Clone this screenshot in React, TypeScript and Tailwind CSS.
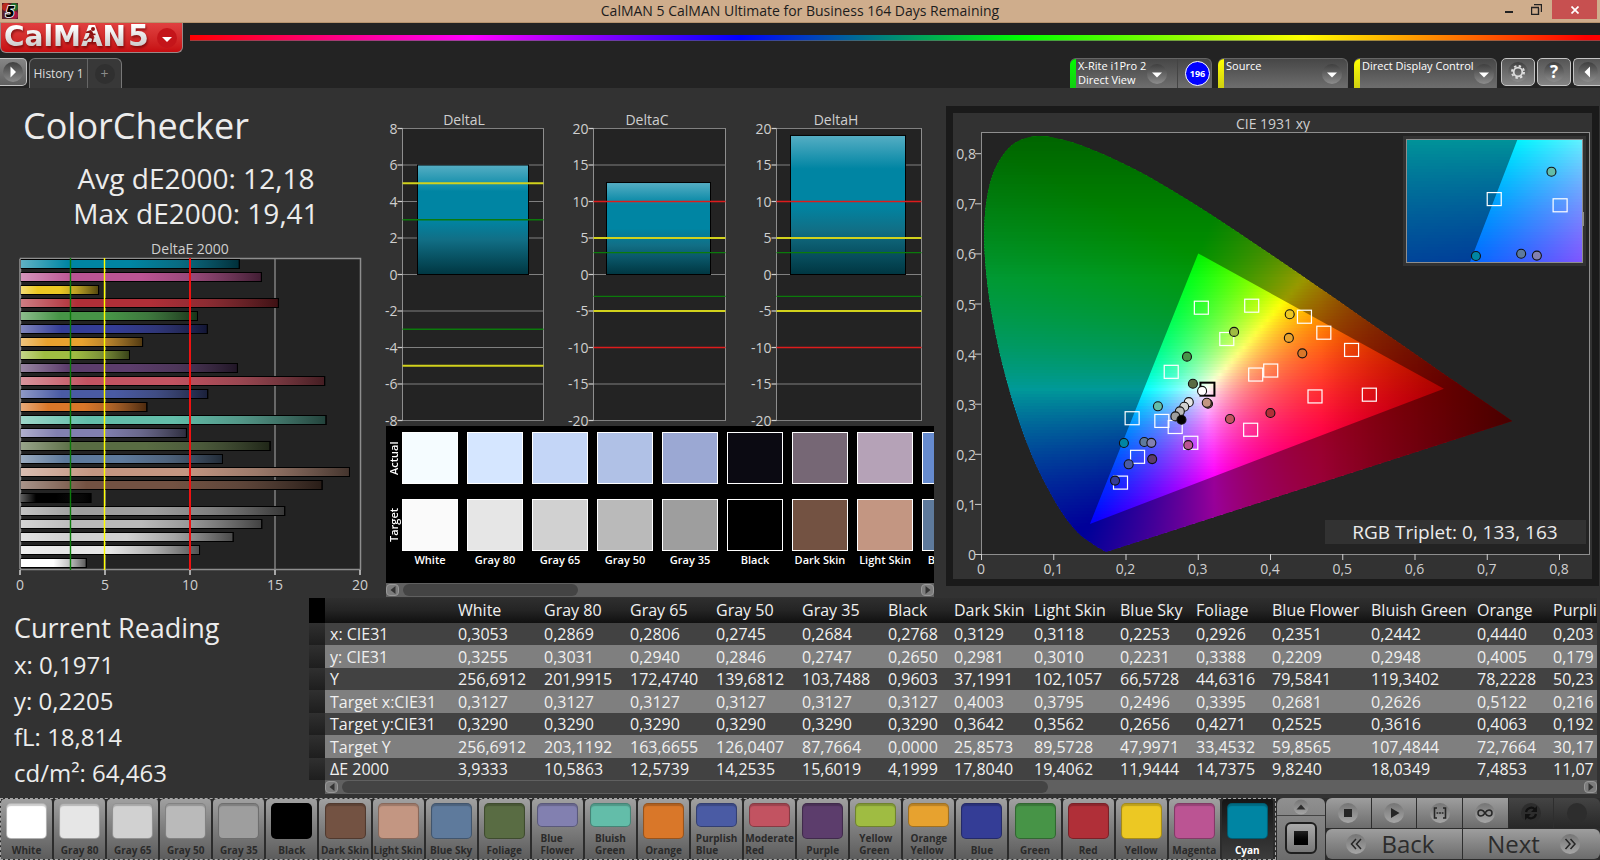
import { useId } from 'react';
import type { ReactNode } from 'react';
import clsx from 'clsx';

type XY = [number, number];

type Patch = {
  name: string;
  lines?: string[];
  color: string;
  de: number;
  measured: XY;
  target: XY;
};

const PATCHES: Patch[] = [
  { name: 'White', color: '#ffffff', de: 3.93, measured: [0.3053, 0.3255], target: [0.3127, 0.329] },
  { name: 'Gray 80', color: '#e6e6e6', de: 10.59, measured: [0.2869, 0.3031], target: [0.3127, 0.329] },
  { name: 'Gray 65', color: '#d1d1d1', de: 12.57, measured: [0.2806, 0.294], target: [0.3127, 0.329] },
  { name: 'Gray 50', color: '#bababa', de: 14.25, measured: [0.2745, 0.2846], target: [0.3127, 0.329] },
  { name: 'Gray 35', color: '#9e9e9e', de: 15.6, measured: [0.2684, 0.2747], target: [0.3127, 0.329] },
  { name: 'Black', color: '#000000', de: 4.2, measured: [0.2768, 0.268], target: [0.3127, 0.329] },
  { name: 'Dark Skin', color: '#735242', de: 17.8, measured: [0.3135, 0.3], target: [0.4003, 0.3662] },
  { name: 'Light Skin', color: '#c39682', de: 19.41, measured: [0.3118, 0.302], target: [0.3795, 0.3582] },
  { name: 'Blue Sky', color: '#5e7a9c', de: 11.94, measured: [0.2253, 0.2235], target: [0.2496, 0.2656] },
  { name: 'Foliage', color: '#596c43', de: 14.74, measured: [0.2926, 0.3398], target: [0.3395, 0.4291] },
  { name: 'Blue Flower', lines: ['Blue', 'Flower'], color: '#8280b0', de: 9.82, measured: [0.2351, 0.2219], target: [0.2681, 0.2535] },
  { name: 'Bluish Green', lines: ['Bluish', 'Green'], color: '#63bda9', de: 18.03, measured: [0.2442, 0.2948], target: [0.2626, 0.3636] },
  { name: 'Orange', color: '#d97729', de: 7.49, measured: [0.444, 0.4005], target: [0.5122, 0.4073] },
  { name: 'Purplish Blue', lines: ['Purplish', 'Blue'], color: '#4a5ba4', de: 11.07, measured: [0.2037, 0.179], target: [0.216, 0.194] },
  { name: 'Moderate Red', lines: ['Moderate', 'Red'], color: '#c25361', de: 17.95, measured: [0.3439, 0.2694], target: [0.4616, 0.3145] },
  { name: 'Purple', color: '#5c3d6c', de: 12.82, measured: [0.2362, 0.1894], target: [0.2897, 0.222] },
  { name: 'Yellow Green', lines: ['Yellow', 'Green'], color: '#9fbc42', de: 6.47, measured: [0.3496, 0.4433], target: [0.374, 0.4956] },
  { name: 'Orange Yellow', lines: ['Orange', 'Yellow'], color: '#e7a22f', de: 7.24, measured: [0.4254, 0.4313], target: [0.4738, 0.4417] },
  { name: 'Blue', color: '#343d96', de: 11.05, measured: [0.1848, 0.1465], target: [0.1924, 0.1425] },
  { name: 'Green', color: '#479447', de: 10.47, measured: [0.2844, 0.3939], target: [0.3043, 0.4916] },
  { name: 'Red', color: '#b02f38', de: 15.23, measured: [0.3999, 0.2814], target: [0.5368, 0.318] },
  { name: 'Yellow', color: '#ecc823', de: 4.65, measured: [0.4266, 0.4785], target: [0.447, 0.4736] },
  { name: 'Magenta', color: '#bb5493', de: 14.23, measured: [0.2862, 0.2174], target: [0.3725, 0.248] },
  { name: 'Cyan', color: '#0085a3', de: 12.93, measured: [0.1971, 0.2215], target: [0.2085, 0.271] },
];

const ACTUAL = ['#f5fcff', '#d5e6ff', '#c4d6f7', '#b0c1e6', '#9ba8d3', '#0b0a12', '#766775', '#b5a2b7', '#668bcf'];

const COLUMNS = [
  { label: 'White', width: 'w-[86px]' },
  { label: 'Gray 80', width: 'w-[86px]' },
  { label: 'Gray 65', width: 'w-[86px]' },
  { label: 'Gray 50', width: 'w-[86px]' },
  { label: 'Gray 35', width: 'w-[86px]' },
  { label: 'Black', width: 'w-[66px]' },
  { label: 'Dark Skin', width: 'w-[80px]' },
  { label: 'Light Skin', width: 'w-[86px]' },
  { label: 'Blue Sky', width: 'w-[76px]' },
  { label: 'Foliage', width: 'w-[76px]' },
  { label: 'Blue Flower', width: 'w-[99px]' },
  { label: 'Bluish Green', width: 'w-[106px]' },
  { label: 'Orange', width: 'w-[76px]' },
  { label: 'Purpli', width: '' },
];

const ROWS: [string, string[]][] = [
  ['x: CIE31', ['0,3053', '0,2869', '0,2806', '0,2745', '0,2684', '0,2768', '0,3129', '0,3118', '0,2253', '0,2926', '0,2351', '0,2442', '0,4440', '0,203']],
  ['y: CIE31', ['0,3255', '0,3031', '0,2940', '0,2846', '0,2747', '0,2650', '0,2981', '0,3010', '0,2231', '0,3388', '0,2209', '0,2948', '0,4005', '0,179']],
  ['Y', ['256,6912', '201,9915', '172,4740', '139,6812', '103,7488', '0,9603', '37,1991', '102,1057', '66,5728', '44,6316', '79,5841', '119,3402', '78,2228', '50,23']],
  ['Target x:CIE31', ['0,3127', '0,3127', '0,3127', '0,3127', '0,3127', '0,3127', '0,4003', '0,3795', '0,2496', '0,3395', '0,2681', '0,2626', '0,5122', '0,216']],
  ['Target y:CIE31', ['0,3290', '0,3290', '0,3290', '0,3290', '0,3290', '0,3290', '0,3642', '0,3562', '0,2656', '0,4271', '0,2525', '0,3616', '0,4063', '0,192']],
  ['Target Y', ['256,6912', '203,1192', '163,6655', '126,0407', '87,7664', '0,0000', '25,8573', '89,5728', '47,9971', '33,4532', '59,8565', '107,4844', '72,7664', '30,17']],
  ['ΔE 2000', ['3,9333', '10,5863', '12,5739', '14,2535', '15,6019', '4,1999', '17,8040', '19,4062', '11,9444', '14,7375', '9,8240', '18,0349', '7,4853', '11,07']],
];

const LOCUS: XY[] = [
  [0.1741, 0.005], [0.1714, 0.0051], [0.1644, 0.0109], [0.1566, 0.0177], [0.144, 0.0297], [0.1355, 0.0399],
  [0.1241, 0.0578], [0.1096, 0.0868], [0.0913, 0.1327], [0.0687, 0.2007], [0.0454, 0.295], [0.0235, 0.4127],
  [0.0082, 0.5384], [0.0039, 0.6548], [0.0139, 0.7502], [0.0389, 0.812], [0.0743, 0.8338], [0.1142, 0.8262],
  [0.1547, 0.8059], [0.1929, 0.7816], [0.2296, 0.7543], [0.3016, 0.6923], [0.3731, 0.6245], [0.4441, 0.5547],
  [0.5125, 0.4866], [0.5752, 0.4242], [0.627, 0.3725], [0.6658, 0.334], [0.6915, 0.3083], [0.719, 0.2809],
  [0.7347, 0.2653],
];

const GAMUT: XY[] = [[0.64, 0.33], [0.3, 0.6], [0.15, 0.06]];

const comma = (n: number) => String(n).replace('.', ',');

// brightest sRGB primaries mix for a chromaticity, out-of-gamut channels clipped
function chromaColor(x: number, y: number) {
  const yy = Math.max(y, 0.002);
  const X = x / yy;
  const Z = (1 - x - yy) / yy;
  const rgb = [
    3.2406 * X - 1.5372 - 0.4986 * Z,
    -0.9689 * X + 1.8758 + 0.0415 * Z,
    0.0557 * X - 0.204 + 1.057 * Z,
  ].map((v) => Math.max(v, 0));
  const max = Math.max(...rgb, 0.0001);
  const fade = Math.min(1 - 2 * Math.max(0, x - 0.47), 1 - 1.2 * Math.max(0, y - 0.55));
  return `rgb(${rgb.map((v) => Math.round((255 * fade * v) / max)).join(',')})`;
}

function smoothPath(pts: XY[]) {
  let d = `M${pts[0][0]},${pts[0][1]}`;
  for (let i = 0; i < pts.length - 1; i++) {
    const p0 = pts[Math.max(i - 1, 0)];
    const p1 = pts[i];
    const p2 = pts[i + 1];
    const p3 = pts[Math.min(i + 2, pts.length - 1)];
    d += `C${p1[0] + (p2[0] - p0[0]) / 6},${p1[1] + (p2[1] - p0[1]) / 6} ${p2[0] - (p3[0] - p1[0]) / 6},${p2[1] - (p3[1] - p1[1]) / 6} ${p2[0]},${p2[1]}`;
  }
  return d + 'Z';
}

type View = { left: number; top: number; width: number; height: number; ox: number; oy: number; sx: number; sy: number };

function ChromaField({ view }: { view: View }) {
  const id = useId();
  const { left, top, width, height, ox, oy, sx, sy } = view;
  const step = 3;
  const stops = Math.ceil(width / 6);
  const toPx = ([x, y]: XY): XY => [ox + x * sx, oy - y * sy];
  const locus = smoothPath(LOCUS.map(toPx));
  const gamut = 'M' + GAMUT.map((p) => toPx(p).join(',')).join('L') + 'Z';
  const rows = Array.from({ length: Math.ceil(height / step) }, (_, i) => top + i * step);

  return (
    <g>
      <defs>
        <clipPath id={`${id}-locus`}>
          <path d={locus} />
        </clipPath>
        <clipPath id={`${id}-box`}>
          <rect x={left} y={top} width={width} height={height} />
        </clipPath>
        {rows.map((y, i) => (
          <linearGradient key={i} id={`${id}-${i}`} gradientUnits="userSpaceOnUse" x1={left} x2={left + width} y1="0" y2="0">
            {Array.from({ length: stops + 1 }, (_, s) => {
              const px = left + (width * s) / stops;
              return <stop key={s} offset={s / stops} stopColor={chromaColor((px - ox) / sx, (oy - y - step / 2) / sy)} />;
            })}
          </linearGradient>
        ))}
      </defs>
      <g clipPath={`url(#${id}-box)`}>
        <g clipPath={`url(#${id}-locus)`}>
          {rows.map((y, i) => (
            <rect key={i} x={left} y={y} width={width} height={step + 1} fill={`url(#${id}-${i})`} />
          ))}
          <path d={`M${left - 2000},${top - 2000}h6000v6000h-6000Z${gamut}`} fillRule="evenodd" fill="#000" fillOpacity="0.4" />
        </g>
      </g>
    </g>
  );
}

function Markers({ view, names }: { view: View; names?: { targets: string[]; dots: string[] } }) {
  const { ox, oy, sx, sy } = view;
  const targets = PATCHES.slice(6).filter((p) => !names || names.targets.includes(p.name));
  const dots = PATCHES.filter((p) => !names || names.dots.includes(p.name));
  return (
    <g>
      {targets.map((p) => (
        <rect key={p.name} x={ox + p.target[0] * sx - 7} y={oy - p.target[1] * sy - 6.5} width="14" height="13" fill="none" stroke="#fff" strokeWidth="1.2" />
      ))}
      {!names && <rect x={ox + 0.3127 * sx - 7} y={oy - 0.329 * sy - 6.5} width="14" height="13" fill="none" stroke="#000" strokeWidth="2" />}
      {dots.map((p) => (
        <circle key={p.name} cx={ox + p.measured[0] * sx} cy={oy - p.measured[1] * sy} r="4.5" fill={p.color} stroke="#111" strokeWidth="1.1" />
      ))}
    </g>
  );
}

function CieChart() {
  const main: View = { left: 29, top: 20, width: 607, height: 421, ox: 28.5, oy: 441, sx: 722.5, sy: 501 };
  // inset is a magnified window round the selected patch
  const inset: View = { left: 453, top: 26, width: 177, height: 124, ox: 207, oy: 398, sx: 1603, sy: 1151 };
  return (
    <svg viewBox="0 0 639 466" className="block w-full" role="img" aria-label="CIE 1931 xy">
      <rect width="639" height="466" fill="#323232" />
      <text x="320" y="16" textAnchor="middle" fontSize="14" fill="#cfcfcf">CIE 1931 xy</text>
      <rect x="28.5" y="19.5" width="608" height="422" fill="#232323" />
      <ChromaField view={main} />
      <rect x="28.5" y="19.5" width="608" height="422" fill="none" stroke="#8e8e8e" />
      {[0, 0.1, 0.2, 0.3, 0.4, 0.5, 0.6, 0.7, 0.8].map((v) => (
        <g key={v} fontSize="14" fill="#cfcfcf">
          <path d={`M${28.5 + v * 722.5},441v6M22,${441.5 - v * 501}h6`} stroke="#cfcfcf" fill="none" />
          <text x={28 + v * 722.5} y="461" textAnchor="middle">{comma(v)}</text>
          <text x="23" y={447 - v * 501} textAnchor="end">{comma(v)}</text>
        </g>
      ))}
      <Markers view={main} />
      <rect x="450" y="23" width="183" height="130" fill="#323232" />
      <ChromaField view={inset} />
      <rect x="453.5" y="26.5" width="176" height="123" fill="none" stroke="#8e8e8e" />
      <path d="M630.5,99v14" stroke="#8e8e8e" />
      <Markers view={inset} names={{ targets: ['Cyan', 'Blue Sky'], dots: ['Bluish Green', 'Cyan', 'Blue Sky', 'Blue Flower'] }} />
      <rect x="372" y="407" width="261" height="24" fill="#323232" />
      <text x="502" y="426" textAnchor="middle" fontSize="19" fill="#ececec">RGB Triplet: 0, 133, 163</text>
    </svg>
  );
}

function DeltaEChart() {
  const bars = [...PATCHES].reverse();
  return (
    <svg viewBox="0 0 380 356" className="block w-full overflow-visible" role="img" aria-label="DeltaE 2000">
      <defs>
        <linearGradient id="shadeX">
          <stop offset="0" stopColor="#fff" stopOpacity="0.38" />
          <stop offset="0.22" stopColor="#fff" stopOpacity="0" />
          <stop offset="0.5" stopColor="#222" stopOpacity="0" />
          <stop offset="0.72" stopColor="#222" stopOpacity="0.25" />
          <stop offset="1" stopColor="#000" stopOpacity="0.65" />
        </linearGradient>
      </defs>
      <text x="190" y="12" textAnchor="middle" fontSize="14" fill="#cfcfcf">DeltaE 2000</text>
      <rect x="20.5" y="16.5" width="340" height="311" fill="#232323" stroke="#8e8e8e" strokeWidth="1.5" />
      {[5, 10, 15].map((v) => (
        <path key={v} d={`M${20 + v * 17},17v310`} stroke="#808080" strokeWidth="1.5" />
      ))}
      {bars.map((p, i) => (
        <g key={p.name} stroke="#000">
          <rect x="20.5" y={17.5 + i * 13} width={p.de * 17 - 1} height="9" fill={p.color} />
          <rect x="20.5" y={17.5 + i * 13} width={p.de * 17 - 1} height="9" fill="url(#shadeX)" />
        </g>
      ))}
      <path d="M20,17v310" stroke="#8e8e8e" strokeWidth="1.5" />
      <path d="M70.5,16v312" stroke="#0b7a0b" strokeWidth="1.4" />
      <path d="M104.5,16v312" stroke="#ffff00" strokeWidth="1.4" />
      <path d="M190,16v312" stroke="#ee1111" strokeWidth="2" />
      {[0, 5, 10, 15, 20].map((v) => (
        <g key={v}>
          <path d={`M${20 + v * 17},328v5`} stroke="#cfcfcf" strokeWidth="1.5" />
          <text x={20 + v * 17} y="348" textAnchor="middle" fontSize="14" fill="#cfcfcf">{v}</text>
        </g>
      ))}
    </svg>
  );
}

type DeltaProps = { title: string; width: number; titleX: number; plotX: number; plotW: number; barX: number; barW: number; max: number; step: number; value: number };

function DeltaChart({ title, width, titleX, plotX, plotW, barX, barW, max, step, value }: DeltaProps) {
  const k = 146 / max;
  const zero = 186.5;
  const ticks = Array.from({ length: 9 }, (_, i) => max - i * step);
  const limits: [number, string, number][] = [
    [3, '#0b7a0b', 1.3],
    [5, '#d2d21c', 1.8],
    [10, '#dd1c1c', 1.4],
  ];
  return (
    <svg viewBox={`0 0 ${width} 338`} className="block min-w-0 overflow-visible" style={{ flex: `${width} 1 0%` }} role="img" aria-label={title}>
      <defs>
        <linearGradient id={`bar${title}`} x1="0" x2="0" y1="0" y2="1">
          <stop offset="0" stopColor="#56aec4" />
          <stop offset="0.24" stopColor="#0085a3" />
          <stop offset="0.5" stopColor="#0085a3" />
          <stop offset="0.68" stopColor="#116f86" />
          <stop offset="1" stopColor="#003641" />
        </linearGradient>
      </defs>
      <text x={titleX} y="37" textAnchor="middle" fontSize="14" fill="#cfcfcf">{title}</text>
      <rect x={plotX} y="40.5" width={plotW} height="292" fill="#232323" stroke="#8e8e8e" />
      {ticks.map((t) => (
        <g key={t}>
          <path d={`M${plotX},${zero - t * k}h${plotW}`} stroke="#808080" />
          <path d={`M${plotX - 5},${zero - t * k}h5`} stroke="#cfcfcf" strokeWidth="1.2" />
          <text x={plotX - 5} y={zero - t * k + 5} textAnchor="end" fontSize="14" fill="#cfcfcf">{t}</text>
        </g>
      ))}
      <rect x={barX} y={zero - value * k} width={barW} height={value * k} fill={`url(#bar${title})`} stroke="#000" />
      {limits.filter(([v]) => v < max).map(([v, c, w]) => (
        <path key={v} d={`M${plotX},${zero - v * k}h${plotW}M${plotX},${zero + v * k}h${plotW}`} stroke={c} strokeWidth={w} />
      ))}
    </svg>
  );
}

function ScrollBar({ label, thumb }: { label: string; thumb: string }) {
  const arrow = 'flex h-3 w-[13px] shrink-0 items-center justify-center rounded-sm border border-[#989898] bg-[#7c7c7c]';
  return (
    <div className="flex h-[14px] items-center justify-between bg-[#606060]" aria-label={label}>
      <button className={arrow} aria-label={`${label} left`}>
        <svg viewBox="0 0 6 8" className="h-2 w-[6px]"><path d="M5.5 0v8L0.5 4z" fill="#333" /></svg>
      </button>
      <div className="mx-1 flex-1">
        <div className={clsx('h-3 rounded-full bg-[#444]', thumb)} />
      </div>
      <button className={arrow} aria-label={`${label} right`}>
        <svg viewBox="0 0 6 8" className="h-2 w-[6px]"><path d="M0.5 0v8L5.5 4z" fill="#333" /></svg>
      </button>
    </div>
  );
}

function SwatchPanel() {
  const rows: [string, string[]][] = [
    ['Actual', ACTUAL],
    ['Target', ['#fafafa', ...PATCHES.slice(1, 9).map((p) => p.color)]],
  ];
  return (
    <section className="mr-3 ml-[6px] bg-black">
      <div className="flex h-[157px] overflow-hidden pt-[6px]">
        <div className="flex w-4 shrink-0 flex-col gap-[15px]">
          {rows.map(([label]) => (
            <span key={label} className="flex h-[52px] rotate-180 items-center justify-center text-[11px] leading-4 font-semibold text-white [writing-mode:vertical-rl]">
              {label}
            </span>
          ))}
        </div>
        <div className="flex gap-[9px] overflow-hidden">
          {ACTUAL.map((_, i) => (
            <div key={i} className="flex w-14 shrink-0 flex-col items-center">
              <div className="h-[52px] w-14 border border-white" style={{ background: rows[0][1][i] }} />
              <div className="mt-[15px] h-[52px] w-14 border border-white" style={{ background: rows[1][1][i] }} />
              <span className="mt-px text-[11px] leading-4 font-semibold whitespace-nowrap text-white">{PATCHES[i].name}</span>
            </div>
          ))}
        </div>
      </div>
      <ScrollBar label="Swatches" thumb="w-[34%]" />
    </section>
  );
}

function ReadingTable() {
  return (
    <section className="min-w-0 flex-1 pr-[3px]">
      <table className="w-full table-fixed border-collapse text-left text-base text-[#f0f0f0]">
        <thead>
          <tr className="h-[25px] bg-linear-to-b from-[#2f2f2f] via-[#242424] to-[#101010]">
            <td className="w-4 bg-black p-0" />
            <td className="w-32 p-0" />
            {COLUMNS.map((c) => (
              <th key={c.label} scope="col" className={clsx('overflow-hidden p-0 pb-px pl-[5px] leading-5 font-normal whitespace-nowrap', c.width)}>
                {c.label}
              </th>
            ))}
          </tr>
        </thead>
        <tbody>
          {ROWS.map(([label, values]) => (
            <tr key={label} className="h-[22px] bg-[#424242] even:h-[23px] even:bg-[#7f7f7f]">
              <td className="bg-linear-to-b from-[#303030] to-[#1e1e1e] p-0" />
              <th scope="row" className="overflow-hidden p-0 pl-[5px] leading-5 font-normal whitespace-nowrap">{label}</th>
              {values.map((v, i) => (
                <td key={i} className="overflow-hidden p-0 pl-[5px] leading-5 whitespace-nowrap">{v}</td>
              ))}
            </tr>
          ))}
        </tbody>
      </table>
      <div className="ml-4">
        <ScrollBar label="Readings" thumb="w-[57%]" />
      </div>
    </section>
  );
}

function DownArrow() {
  return (
    <svg viewBox="0 0 20 20" className="h-5 w-5 shrink-0" aria-hidden="true">
      <circle cx="10" cy="10" r="10" fill="url(#roundShade)" />
      <path d="M5 8.5h10L10 13.5z" fill="#fff" />
    </svg>
  );
}

function Meter({ bar, className, children, name }: { bar: string; className: string; children: ReactNode; name: string }) {
  return (
    <button aria-label={name} className={clsx('flex h-[30px] items-start rounded-t-md border-t border-r border-[#666] bg-linear-to-b from-[#474747] to-[#6e6e6e] text-left text-[11px] leading-[14px] text-white', className)}>
      <span className={clsx('mr-[2px] h-full w-[6px] shrink-0 rounded-tl-md', bar)} />
      {children}
    </button>
  );
}

function SquareButton({ name, children }: { name: string; children: ReactNode }) {
  return (
    <button aria-label={name} className="flex h-7 w-[34px] shrink-0 items-center justify-center rounded-[5px] border border-[#c4c4c4] bg-linear-to-b from-[#555] via-[#6c6c6c] to-[#858585]">
      <svg viewBox="0 0 22 22" className="h-[22px] w-[22px]" aria-hidden="true">
        <circle cx="11" cy="11" r="10" fill="url(#roundShade)" />
        {children}
      </svg>
    </button>
  );
}

function Header() {
  return (
    <header className="bg-[#232323]">
      <div className="flex h-[23px] items-center border-b border-[#b7946f] bg-[#cfad8c] pl-[2px] text-[#1c1c1c]">
        <svg viewBox="0 0 16 16" className="h-4 w-4 overflow-visible" aria-hidden="true">
          <rect width="16" height="16" fill="#56202a" />
          <circle cx="4" cy="4" r="4" fill="#b72a1d" />
          <circle cx="12" cy="4" r="4" fill="#1f6b2c" />
          <circle cx="12" cy="12" r="4" fill="#a31843" />
          <text x="8" y="13.5" textAnchor="middle" fontSize="15" fontWeight="800" fontStyle="italic" fill="#000" stroke="#fff" strokeWidth="1.6" paintOrder="stroke">5</text>
        </svg>
        <h1 className="flex-1 pl-[86px] text-center text-sm leading-5">CalMAN 5 CalMAN Ultimate for Business 164 Days Remaining</h1>
        <div className="flex h-full items-start pr-[3px]">
          <button aria-label="Minimize" className="flex h-[19px] w-[25px] items-end justify-center pb-[6px]"><span className="h-[2px] w-2 bg-[#222]" /></button>
          <button aria-label="Restore" className="flex h-[19px] w-[31px] items-center justify-center">
            <svg viewBox="0 0 11 11" className="h-[11px] w-[11px]"><path d="M3 0.5h7.5V8M0 3.5h8M0.5 3v7.5h7V4" fill="none" stroke="#222" strokeWidth="1.4" /></svg>
          </button>
          <button aria-label="Close" className="flex h-[19px] w-[45px] items-center justify-center bg-[#c75050]">
            <svg viewBox="0 0 8 8" className="h-2 w-2"><path d="M0.5 0.5l7 7M7.5 0.5l-7 7" stroke="#fff" strokeWidth="1.7" /></svg>
          </button>
        </div>
      </div>

      <div className="flex h-[35px] items-start">
        <button aria-label="CalMAN 5 menu" className="flex h-[30px] w-[183px] items-center rounded-b-md border border-t-0 border-[#9a8888] bg-linear-to-b from-[#e04040] to-[#c60b10] pl-1">
          <svg viewBox="0 0 148 28" className="h-7 w-[148px] overflow-visible drop-shadow-[1px_2px_1px_rgba(90,0,0,0.6)]" aria-hidden="true">
            <defs>
              <linearGradient id="silver" x1="0" x2="0" y1="0" y2="1">
                <stop offset="0.2" stopColor="#fff" />
                <stop offset="0.9" stopColor="#c4c4c4" />
              </linearGradient>
            </defs>
            <g fontFamily="'DejaVu Sans'" fontWeight="700" fill="url(#silver)">
              <text x="-1" y="22" fontSize="28">CalMAN</text>
              <text x="123" y="22" fontSize="30">5</text>
            </g>
            <circle cx="88" cy="5" r="2" fill="#8c1010" />
            <path d="M81 8.5l4.500-1.500 2 3 3 0.500M86 7l-1.500 5.500 3.500 2-1 4M84.500 12.500l-3 3.500-3 0" fill="none" stroke="#8c1010" strokeWidth="1.500" />
          </svg>
          <svg viewBox="0 0 20 20" className="ml-1 h-5 w-5" aria-hidden="true">
            <circle cx="10" cy="10" r="10" fill="#c4151a" />
            <path d="M5 9h10l-5 5z" fill="#fff" />
          </svg>
        </button>
        <div className="mt-3 ml-[7px] h-[6px] flex-1 border-b border-[#666]/60 bg-[linear-gradient(90deg,#ff0000,#ff00ff_20%,#0000ff_39%,#00ff00_59%,#ffff00_79%,#ff0000_99%)]" />
      </div>

      <div className="flex h-[30px] items-start">
        <button aria-label="Show workflow" className="flex h-7 w-[27px] items-center rounded-r-[5px] border border-l-0 border-[#c4c4c4] bg-linear-to-b from-[#868686] to-[#606060] pl-[2px]">
          <svg viewBox="0 0 22 22" className="h-[22px] w-[22px]" aria-hidden="true">
            <circle cx="11" cy="11" r="10" fill="url(#roundShade)" />
            <path d="M8.500 5.500v11l5.500-5.500z" fill="#fff" />
          </svg>
        </button>
        <div className="ml-[2px] flex h-[30px] rounded-t-md border border-b-0 border-[#777] bg-[#383838]">
          <button className="w-[58px] border-r border-[#666] text-center text-xs text-[#ddd]">History 1</button>
          <button aria-label="Add history" className="flex w-[33px] items-center justify-center">
            <span className="flex h-5 w-5 items-center justify-center rounded-full bg-[#303030] text-sm leading-5 text-[#8a8a8a]">+</span>
          </button>
        </div>
        <div className="ml-auto flex">
          <Meter name="Meter" bar="bg-linear-to-b from-[#00ff00] to-[#11cc11]" className="mr-[6px] w-[142px]">
            <span className="w-[69px] shrink-0 whitespace-nowrap">X-Rite i1Pro 2<br />Direct View</span>
            <span className="flex h-full flex-1 items-center"><DownArrow /></span>
            <span className="flex h-full items-center border-l border-[#444] pr-px pl-[7px]">
              <span className="flex h-[25px] w-[25px] items-center justify-center rounded-full border border-white bg-[#0000ff] text-[9px] font-bold">196</span>
            </span>
          </Meter>
          <Meter name="Source" bar="bg-linear-to-b from-[#ffff00] to-[#d0d010]" className="mr-[6px] w-[130px]">
            <span className="flex-1">Source</span>
            <span className="flex h-full items-center pr-[5px]"><DownArrow /></span>
          </Meter>
          <Meter name="Display control" bar="bg-linear-to-b from-[#ffff00] to-[#d0d010]" className="mr-1 w-[143px]">
            <span className="flex-1 whitespace-nowrap">Direct Display Control</span>
            <span className="flex h-full items-center pr-[2px]"><DownArrow /></span>
          </Meter>
          <div className="flex gap-[2px]">
            <SquareButton name="Settings">
              <circle cx="11" cy="11" r="4.3" fill="none" stroke="#ddd" strokeWidth="1.8" />
              <circle cx="11" cy="11" r="6" fill="none" stroke="#ddd" strokeWidth="2" strokeDasharray="2.4 2.31" />
            </SquareButton>
            <SquareButton name="Help">
              <text x="11" y="17" textAnchor="middle" fontSize="17" fontWeight="700" fill="#fff">?</text>
            </SquareButton>
            <button aria-label="Show panel" className="flex h-7 w-[27px] items-center rounded-l-[5px] border border-r-0 border-[#c4c4c4] bg-linear-to-b from-[#555] to-[#858585] pl-[3px]">
              <svg viewBox="0 0 22 22" className="h-[22px] w-[22px]" aria-hidden="true">
                <circle cx="11" cy="11" r="10" fill="url(#roundShade)" />
                <path d="M13 5.500v11L7.500 11z" fill="#fff" />
              </svg>
            </button>
          </div>
        </div>
      </div>
    </header>
  );
}

function PatchButton({ patch }: { patch: Patch }) {
  const selected = patch.name === 'Cyan';
  return (
    <button
      className={clsx(
        'flex min-w-0 flex-1 flex-col items-center justify-between overflow-hidden rounded-t-sm border-r-2 border-[#2c2c2c] pt-1 text-[10px] leading-3 font-bold whitespace-nowrap',
        selected ? 'bg-linear-to-b from-[#161616] to-[#3c3c3c] text-white' : 'bg-linear-to-b from-[#a0a0a0] via-[#7d7d7d] to-[#5c5c5c] text-[#2a2a2a]',
      )}
    >
      <span
        className={clsx('w-[41px] shrink-0 rounded-[5px] border border-black/30 shadow-[inset_0_2px_1px_rgba(0,0,0,0.2)]', patch.lines ? 'h-6' : 'h-9')}
        style={{ background: patch.color }}
      />
      <span className="pb-[3px] text-left">
        {(patch.lines ?? [patch.name]).map((line) => (
          <span key={line} className="block">{line}</span>
        ))}
      </span>
    </button>
  );
}

function RoundIcon({ children, dark }: { children?: ReactNode; dark?: boolean }) {
  return (
    <svg viewBox="0 0 20 20" className="h-5 w-5" aria-hidden="true">
      <circle cx="10" cy="10" r="10" fill={dark ? '#2d2d2d' : 'url(#knob)'} />
      {children}
    </svg>
  );
}

function Transport() {
  const cell = 'flex items-center justify-center border-r border-[#2e2e2e]';
  const light = 'bg-linear-to-b from-[#9e9e9e] to-[#6c6c6c]';
  const dark = 'bg-linear-to-b from-[#444] to-[#282828]';
  return (
    <div className="flex w-[324px] shrink-0 gap-px pl-px">
      <div className="flex w-12 flex-col rounded-t-md bg-linear-to-b from-[#909090] to-[#6c6c6c]">
        <button aria-label="Expand" className="flex h-[18px] items-center justify-center border-b border-[#444]">
          <svg viewBox="0 0 16 16" className="h-4 w-4" aria-hidden="true">
            <circle cx="8" cy="8" r="7.500" fill="url(#knob)" />
            <path d="M3.500 10.500h9L8 5.500z" fill="#2c2c2c" />
          </svg>
        </button>
        <button aria-label="Pattern window" className="mx-auto mt-[6px] flex h-8 w-8 items-center justify-center rounded-md border-2 border-[#1e1e1e] bg-linear-to-b from-[#aaa] to-[#777]">
          <span className="h-[14px] w-[14px] bg-linear-to-b from-[#222] to-black" />
        </button>
      </div>
      <div className="flex flex-1 flex-col gap-px">
        <div className="grid h-[30px] grid-cols-6 overflow-hidden rounded-t-md">
          <button aria-label="Stop" className={clsx(cell, light)}><RoundIcon><rect x="6" y="6" width="8" height="8" fill="#262626" /></RoundIcon></button>
          <button aria-label="Play" className={clsx(cell, light)}><RoundIcon><path d="M7 5v10l8.500-5z" fill="#262626" /></RoundIcon></button>
          <button aria-label="Read series" className={clsx(cell, light)}>
            <RoundIcon>
              <path d="M7 5H4.500v10H7M13 5h2.500v10H13" fill="none" stroke="#262626" strokeWidth="1.600" />
              <path d="M6.500 10h7" stroke="#262626" strokeWidth="1.600" strokeDasharray="1.8 0.8" />
            </RoundIcon>
          </button>
          <button aria-label="Read continuous" className={clsx(cell, light)}>
            <RoundIcon><path d="M10 10C8.500 7.600 7.400 7 6 7a3 3 0 000 6c1.400 0 2.500-.6 4-3s2.600-3 4-3a3 3 0 010 6c-1.400 0-2.500-.6-4-3z" fill="none" stroke="#262626" strokeWidth="1.500" /></RoundIcon>
          </button>
          <button aria-label="Refresh" className={clsx(cell, dark)}>
            <RoundIcon dark>
              <path d="M5 9a5.200 5.200 0 019-2.500M15 11a5.200 5.200 0 01-9 2.500" fill="none" stroke="#111" strokeWidth="2.200" />
              <path d="M16 3v6h-6zM4 17v-6h6z" fill="#111" />
            </RoundIcon>
          </button>
          <button aria-label="Record" className={clsx('flex items-center justify-center', dark)}><RoundIcon dark /></button>
        </div>
        <div className="grid h-[30px] grid-cols-2 overflow-hidden rounded-md text-2xl leading-[28px] text-[#2c2c2c]">
          <button className={clsx('flex items-center justify-center gap-4 border-r border-[#2e2e2e] pr-2', light)}>
            <RoundIcon><path d="M10 5l-4.500 5 4.500 5M15 5l-4.500 5 4.500 5" fill="none" stroke="#262626" strokeWidth="1.500" /></RoundIcon>
            Back
          </button>
          <button className={clsx('flex items-center justify-center gap-5 pl-1', light)}>
            Next
            <RoundIcon><path d="M5.500 5l4.500 5-4.500 5M10.500 5l4.500 5-4.500 5" fill="none" stroke="#262626" strokeWidth="1.500" /></RoundIcon>
          </button>
        </div>
      </div>
    </div>
  );
}

export default function App() {
  return (
    <div className="flex min-h-screen flex-col overflow-hidden bg-[#323232] font-['Open_Sans','Noto_Sans',sans-serif] text-[#ececec]">
      <svg className="absolute h-0 w-0" aria-hidden="true">
        <defs>
          <linearGradient id="roundShade" x1="0" x2="0" y1="0" y2="1">
            <stop offset="0" stopColor="#3f3f3f" />
            <stop offset="1" stopColor="#8c8c8c" />
          </linearGradient>
          <linearGradient id="knob" x1="0" x2="0" y1="0" y2="1">
            <stop offset="0" stopColor="#757575" />
            <stop offset="1" stopColor="#a6a6a6" />
          </linearGradient>
        </defs>
      </svg>
      <Header />

      <main className="flex-1">
        <div className="flex items-start">
          <section className="min-w-0 flex-[380]">
            <h2 className="pt-[13px] pl-[23px] text-4xl leading-[50px]">ColorChecker</h2>
            <div className="pt-[10px] pr-[10px] pb-[6px] pl-[22px] text-center text-[28px] leading-[35px]">
              <p>Avg dE2000: 12,18</p>
              <p>Max dE2000: 19,41</p>
            </div>
            <div className="pt-[5px]">
              <DeltaEChart />
            </div>
          </section>

          <section className="min-w-0 flex-[566]">
            <div className="flex">
              <DeltaChart title="DeltaL" width={180} titleX={84} plotX={22.5} plotW={141} barX={37.5} barW={111} max={8} step={2} value={6} />
              <DeltaChart title="DeltaC" width={180} titleX={87} plotX={33.5} plotW={132} barX={46.5} barW={104} max={20} step={5} value={12.6} />
              <DeltaChart title="DeltaH" width={206} titleX={96} plotX={36.5} plotW={145} barX={50.5} barW={115} max={20} step={5} value={19.05} />
            </div>
            <SwatchPanel />
          </section>

          <section className="min-w-0 flex-[654] pt-[18px]">
            <div className="mr-px border-[7px] border-[#1a1a1a]">
              <CieChart />
            </div>
          </section>
        </div>

        <div className="flex items-start">
          <section className="w-[309px] shrink-0 pl-[14px]">
            <h2 className="pt-3 text-[27px] leading-9">Current Reading</h2>
            <div className="pt-px text-2xl leading-9">
              <p>x: 0,1971</p>
              <p>y: 0,2205</p>
              <p>fL: 18,814</p>
              <p>cd/m²: 64,463</p>
            </div>
          </section>
          <ReadingTable />
        </div>
      </main>

      <footer className="flex h-[62px] bg-[#2c2c2c]">
        <div className="flex min-w-0 flex-1 border border-dashed border-[#a8a8a8]">
          {PATCHES.map((p) => (
            <PatchButton key={p.name} patch={p} />
          ))}
        </div>
        <Transport />
      </footer>
    </div>
  );
}
